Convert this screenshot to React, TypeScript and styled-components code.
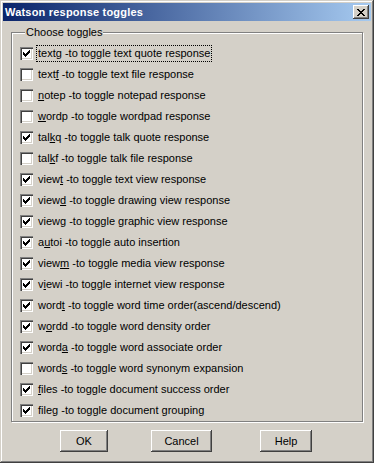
import React from 'react';
import styled, { createGlobalStyle } from 'styled-components';

const GlobalStyle = createGlobalStyle`
  html, body {
    margin: 0;
    padding: 0;
    background: #d4d0c8;
  }
  body {
    font-family: Tahoma, 'Liberation Sans', Arial, sans-serif;
    font-size: 11px;
  }
`;

const Window = styled.div`
  box-sizing: border-box;
  width: 374px;
  height: 463px;
  padding: 3px;
  background: #d4d0c8;
  box-shadow: inset -1px -1px 0 #404040, inset 1px 1px 0 #d4d0c8, inset -2px -2px 0 #808080,
    inset 2px 2px 0 #ffffff;
  display: flex;
  flex-direction: column;
`;

const TitleBar = styled.div`
  height: 18px;
  display: flex;
  align-items: center;
  justify-content: space-between;
  padding: 0 2px 0 2px;
  background: linear-gradient(to right, #0a246a 0%, #a6caf0 100%);
`;

const Title = styled.span`
  color: #ffffff;
  font-weight: bold;
  font-size: 11px;
  letter-spacing: 0.2px;
`;

const CloseButton = styled.div`
  box-sizing: border-box;
  width: 16px;
  height: 14px;
  background: #d4d0c8;
  box-shadow: inset -1px -1px 0 #404040, inset 1px 1px 0 #ffffff, inset -2px -2px 0 #808080;
  display: flex;
  align-items: center;
  justify-content: center;
`;

const Body = styled.div`
  padding: 5px 8px 0 8px;
  display: flex;
  flex-direction: column;
`;

const Group = styled.fieldset`
  margin: 0;
  padding: 4px 0 2px 8px;
  height: 396px;
  box-sizing: border-box;
  border: 1px solid #808080;
  box-shadow: inset 1px 1px 0 #ffffff, 1px 1px 0 #ffffff;
  display: flex;
  flex-direction: column;
`;

const Legend = styled.legend`
  padding: 0 1px;
  margin-left: 5px;
  background: #d4d0c8;
  color: #000;
  font-size: 11px;
  line-height: 13px;
`;

const Row = styled.label`
  height: 21px;
  display: flex;
  align-items: center;
  color: #000;
`;

const Box = styled.span`
  box-sizing: border-box;
  width: 13px;
  height: 13px;
  flex: none;
  background: #ffffff;
  box-shadow: inset 1px 1px 0 #808080, inset 2px 2px 0 #404040, inset -1px -1px 0 #ffffff,
    inset -2px -2px 0 #d4d0c8;
  display: flex;
  align-items: center;
  justify-content: center;
`;

const Caption = styled.span<{ $focused?: boolean }>`
  margin-left: 4px;
  padding: 1px 1px;
  line-height: 13px;
  white-space: nowrap;
  outline: ${({ $focused }) => ($focused ? '1px dotted #000' : 'none')};
`;

const Key = styled.u`
  text-decoration: underline;
  text-underline-offset: 1px;
`;

const Buttons = styled.div`
  display: flex;
  padding: 8px 0 0 49px;
`;

const Button = styled.div<{ $w: number; $ml: number }>`
  box-sizing: border-box;
  width: ${({ $w }) => $w}px;
  height: 22px;
  margin-left: ${({ $ml }) => $ml}px;
  background: #d4d0c8;
  box-shadow: inset -1px -1px 0 #404040, inset 1px 1px 0 #ffffff, inset -2px -2px 0 #808080;
  display: flex;
  align-items: center;
  justify-content: center;
  color: #000;
  font-size: 11px;
`;

const toggles: [string, number, string, boolean][] = [
  ['textg', -1, ' -to toggle text quote response', true],
  ['textf', 4, ' -to toggle text file response', false],
  ['notep', 0, ' -to toggle notepad response', false],
  ['wordp', 0, ' -to toggle wordpad response', false],
  ['talkq', 3, ' -to toggle talk quote response', true],
  ['talkf', 3, ' -to toggle talk file response', false],
  ['viewt', 4, ' -to toggle text view response', true],
  ['viewd', 4, ' -to toggle drawing view response', true],
  ['viewg', -1, ' -to toggle graphic view response', true],
  ['autoi', 1, ' -to toggle auto insertion', true],
  ['viewm', 4, ' -to toggle media view response', true],
  ['viewi', 1, ' -to toggle internet view response', true],
  ['wordt', 4, ' -to toggle word time order(ascend/descend)', true],
  ['wordd', 1, ' -to toggle word density order', true],
  ['worda', 4, ' -to toggle word associate order', true],
  ['words', 4, ' -to toggle word synonym expansion', false],
  ['files', 0, ' -to toggle document success order', true],
  ['fileg', -1, ' -to toggle document grouping', true],
];

const Check = () => (
  <svg width="7" height="7" viewBox="0 0 7 7" shapeRendering="crispEdges">
    <path
      d="M0 2h1v3h-1zM1 3h1v3h-1zM2 4h1v3h-1zM3 3h1v3h-1zM4 2h1v3h-1zM5 1h1v3h-1zM6 0h1v3h-1z"
      fill="#000"
    />
  </svg>
);

const keyed = (word: string, k: number) =>
  k < 0 ? (
    word
  ) : (
    <>
      {word.slice(0, k)}
      <Key>{word[k]}</Key>
      {word.slice(k + 1)}
    </>
  );

export default function App() {
  return (
    <>
      <GlobalStyle />
      <Window>
        <TitleBar>
          <Title>Watson response toggles</Title>
          <CloseButton>
            <svg width="8" height="7" viewBox="0 0 8 7" shapeRendering="crispEdges">
              <path
                d="M0 0h2v1h-2zM6 0h2v1h-2zM1 1h2v1h-2zM5 1h2v1h-2zM2 2h4v1h-4zM3 3h2v1h-2zM2 4h4v1h-4zM1 5h2v1h-2zM5 5h2v1h-2zM0 6h2v1h-2zM6 6h2v1h-2z"
                fill="#000"
              />
            </svg>
          </CloseButton>
        </TitleBar>
        <Body>
          <Group>
            <Legend>Choose toggles</Legend>
            {toggles.map(([word, k, rest, on], i) => (
              <Row key={word}>
                <Box>{on && <Check />}</Box>
                <Caption $focused={i === 0}>
                  {keyed(word, k)}
                  {rest}
                </Caption>
              </Row>
            ))}
          </Group>
          <Buttons>
            <Button $w={48} $ml={0}>OK</Button>
            <Button $w={61} $ml={43}>Cancel</Button>
            <Button $w={52} $ml={48}>Help</Button>
          </Buttons>
        </Body>
      </Window>
    </>
  );
}
